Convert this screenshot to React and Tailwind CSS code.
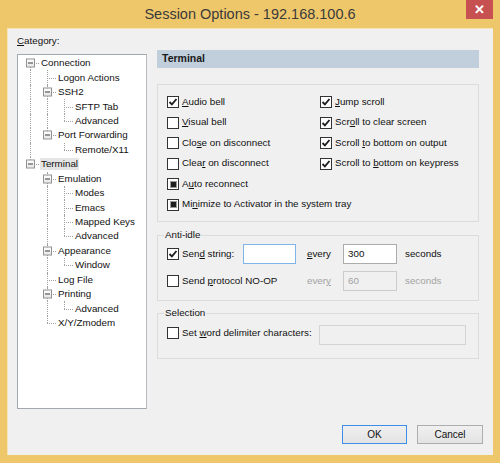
import React from 'react';

const font = { fontFamily: '"Liberation Sans", Arial, sans-serif' };

const TREE = [
  {
    t: 'Connection',
    c: [
      { t: 'Logon Actions' },
      { t: 'SSH2', c: [{ t: 'SFTP Tab' }, { t: 'Advanced' }] },
      { t: 'Port Forwarding', c: [{ t: 'Remote/X11' }] },
    ],
  },
  {
    t: 'Terminal',
    sel: true,
    c: [
      { t: 'Emulation', c: [{ t: 'Modes' }, { t: 'Emacs' }, { t: 'Mapped Keys' }, { t: 'Advanced' }] },
      { t: 'Appearance', c: [{ t: 'Window' }] },
      { t: 'Log File' },
      { t: 'Printing', c: [{ t: 'Advanced' }] },
      { t: 'X/Y/Zmodem' },
    ],
  },
];

function flatten(nodes, level = 0, guides = [], out = []) {
  nodes.forEach((n, i) => {
    const last = i === nodes.length - 1;
    out.push({ ...n, level, guides, last, first: level === 0 && i === 0 });
    if (n.c) flatten(n.c, level + 1, [...guides, !last], out);
  });
  return out;
}

const ROWS = flatten(TREE);

function TreeRow({ row }) {
  return (
    <div className="flex h-[14.45px] items-center">
      {row.guides.map((g, i) => (
        <div key={i} className="relative w-[17px] h-full shrink-0">
          {g && <div className="absolute left-[8px] top-0 bottom-0 border-l border-dotted border-[#a0a0a0]" />}
        </div>
      ))}
      <div className="relative w-[17px] h-full shrink-0">
        <div
          className={`absolute left-[8px] border-l border-dotted border-[#a0a0a0] ${row.first ? 'top-1/2' : 'top-0'} ${row.last ? 'bottom-1/2' : 'bottom-0'}`}
        />
        <div className="absolute left-[8px] right-0 top-1/2 border-t border-dotted border-[#a0a0a0]" />
        {row.c && (
          <div className="absolute left-[4px] top-1/2 -translate-y-1/2 w-[9px] h-[9px] border border-[#919191] bg-gradient-to-b from-white to-[#e6e6e6] flex items-center justify-center">
            <div className="w-[5px] h-px bg-[#3c3c3c]" />
          </div>
        )}
      </div>
      <span className={`ml-px px-px leading-[12px] whitespace-nowrap ${row.sel ? 'bg-[#e5e5e5]' : ''}`}>{row.t}</span>
    </div>
  );
}

function Box({ state, disabled }) {
  return (
    <span
      className={`w-[12px] h-[12px] shrink-0 border flex items-center justify-center bg-white ${disabled ? 'border-[#bcbcbc]' : 'border-[#333]'}`}
    >
      {state === 'on' && (
        <svg width="10" height="10" viewBox="0 0 10 10">
          <path d="M1.5 5 L3.9 7.4 L8.5 2" fill="none" stroke="#1e1e1e" strokeWidth="1.8" />
        </svg>
      )}
      {state === 'mixed' && (
        <span className="w-[7px] h-[7px] border border-[#9a9a9a] flex items-center justify-center">
          <span className="w-[5px] h-[5px] bg-[#1e1e1e]" />
        </span>
      )}
    </span>
  );
}

// label text with one underlined access key
function Key({ text, k }) {
  if (k == null) return text;
  return (
    <>
      {text.slice(0, k)}
      <span className="underline underline-offset-[1px]">{text[k]}</span>
      {text.slice(k + 1)}
    </>
  );
}

function Check({ text, k, state, className = '' }) {
  return (
    <div className={`flex items-center h-[20.5px] ${className}`}>
      <Box state={state} />
      <span className="ml-[3px] whitespace-nowrap">
        <Key text={text} k={k} />
      </span>
    </div>
  );
}

export default function App() {
  return (
    <div style={font} className="w-[500px] h-[463px] bg-[#efc76b] flex flex-col text-[9.8px] text-[#111]">
      <div className="relative h-[28px] shrink-0 flex items-center justify-center">
        <span className="text-[14.5px] text-[#3a3a3a] mt-[1px]">Session Options - 192.168.100.6</span>
        <div className="absolute right-[7px] top-0 w-[27px] h-[19px] bg-[#c75050] flex items-center justify-center text-white text-[13px] font-bold">
          ✕
        </div>
      </div>

      <div className="mx-[7px] mb-[8px] flex-1 bg-[#f0f0f0] border-t border-l border-[#f7e3b4] flex flex-col">
        <div className="flex">
          {/* category tree */}
          <div className="pl-[9px] pt-[6px] w-[139px] shrink-0">
            <div className="h-[19px] leading-[12px]">
              <Key text="Category:" k={0} />
            </div>
            <div className="h-[355px] bg-white border border-[#a3a7ae] border-r-[#b8bcc2] pt-[1px] pl-[4px]">
              {ROWS.map((r, i) => (
                <TreeRow key={i} row={r} />
              ))}
            </div>
          </div>

          {/* options panel */}
          <div className="ml-[10px] pt-[21px] w-[322px]">
            <div className="h-[18px] bg-[#c0cfdb] pl-[5px] flex items-center font-bold text-[10.5px] text-[#1a1a1a]">
              Terminal
            </div>

            <div className="mt-[16px] border border-[#dcdcdc] pl-[9px] pt-[7px] pb-[6px] grid grid-cols-[153px_1fr]">
              <Check text="Audio bell" k={0} state="on" />
              <Check text="Jump scroll" k={0} state="on" />
              <Check text="Visual bell" k={0} />
              <Check text="Scroll to clear screen" k={3} state="on" />
              <Check text="Close on disconnect" k={3} />
              <Check text="Scroll to bottom on output" k={7} state="on" />
              <Check text="Clear on disconnect" k={4} />
              <Check text="Scroll to bottom on keypress" k={10} state="on" />
              <Check text="Auto reconnect" k={1} state="mixed" className="col-span-2" />
              <Check text="Minimize to Activator in the system tray" k={2} state="mixed" className="col-span-2" />
            </div>

            <fieldset className="mt-[7px] border border-[#dcdcdc] pl-[9px] pb-[9px]">
              <legend className="ml-[-3px] px-px leading-[12px]">Anti-idle</legend>
              <div className="mt-[3px] flex items-center h-[20px]">
                <div className="w-[76px] flex items-center">
                  <Box state="on" />
                  <span className="ml-[3px]">
                    <Key text="Send string:" k={3} />
                  </span>
                </div>
                <div className="w-[53px] h-[20px] bg-white border border-[#7eb4ea]" />
                <span className="ml-[11px] w-[36px]">
                  <Key text="every" k={0} />
                </span>
                <div className="w-[54px] h-[20px] bg-white border border-[#acacac] pl-[4px] flex items-center">300</div>
                <span className="ml-[8px]">seconds</span>
              </div>
              <div className="mt-[7px] flex items-center h-[20px]">
                <div className="w-[140px] flex items-center">
                  <Box />
                  <span className="ml-[3px]">
                    <Key text="Send protocol NO-OP" k={5} />
                  </span>
                </div>
                <span className="w-[36px] text-[#a3a3a3]">
                  <Key text="every" k={4} />
                </span>
                <div className="w-[54px] h-[20px] bg-[#f0f0f0] border border-[#cccccc] pl-[4px] flex items-center text-[#a3a3a3]">
                  60
                </div>
                <span className="ml-[8px] text-[#a3a3a3]">seconds</span>
              </div>
            </fieldset>

            <fieldset className="mt-[6px] border border-[#dcdcdc] pl-[9px] pb-[13px]">
              <legend className="ml-[-3px] px-px leading-[12px]">Selection</legend>
              <div className="mt-[6px] flex items-start h-[20px]">
                <div className="w-[152px] flex items-center pt-[1px]">
                  <Box />
                  <span className="ml-[3px]">
                    <Key text="Set word delimiter characters:" k={4} />
                  </span>
                </div>
                <div className="w-[147px] h-[20px] bg-[#f0f0f0] border border-[#d4d4d4]" />
              </div>
            </fieldset>
          </div>
        </div>

        <div className="mt-auto mb-[11px] mr-[10px] flex justify-end gap-[10px]">
          <button className="w-[65px] h-[19px] border border-[#3d8ee6] bg-gradient-to-b from-[#f0f0f0] to-[#e3e3e3] text-[10px] text-[#111]">
            OK
          </button>
          <button className="w-[66px] h-[19px] border border-[#adadad] bg-gradient-to-b from-[#f0f0f0] to-[#e3e3e3] text-[10px] text-[#111]">
            Cancel
          </button>
        </div>
      </div>
    </div>
  );
}
